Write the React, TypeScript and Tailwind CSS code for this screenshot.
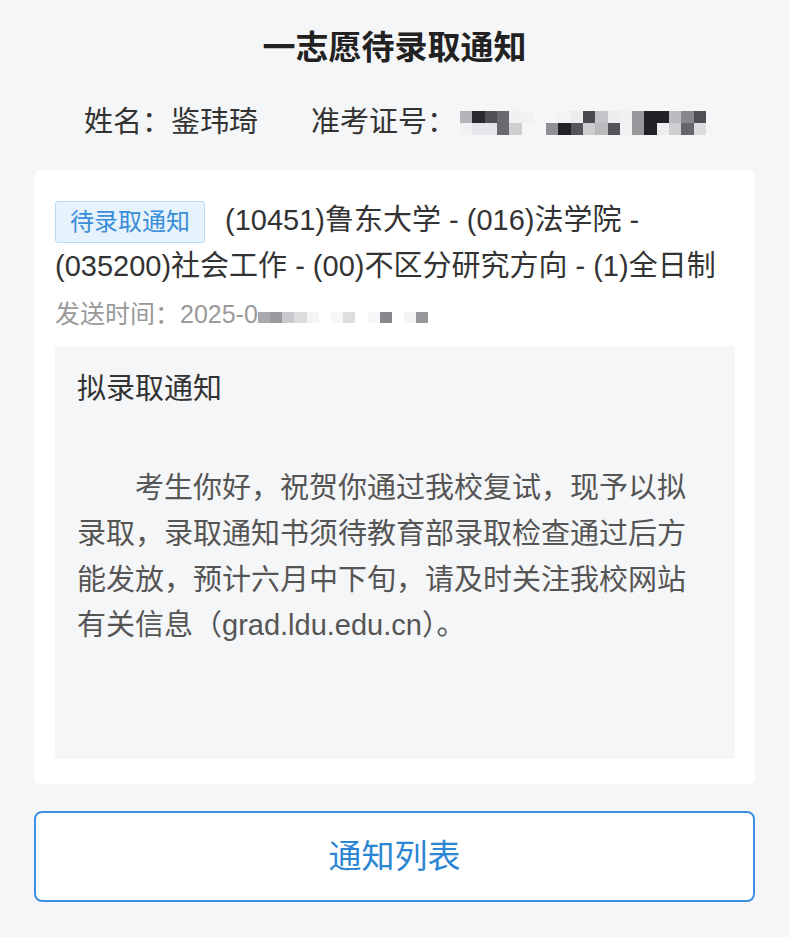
const font = "font-['Liberation_Sans','Noto_Sans_CJK_SC',sans-serif]";

// mosaic cells over the exam number (2 rows x 20 cols, 12px each)
const idRows: string[][] = [
  ["bg-[#b4b4b8]", "bg-[#2a2a2e]", "bg-[#505055]", "bg-[#6a6a6e]", "bg-[#f0f0f2]", "bg-[#f2f2f4]", "bg-transparent", "bg-transparent", "bg-[#f3f3f5]", "bg-[#ececef]", "bg-[#4a4a4e]", "bg-[#c4c4c8]", "bg-[#eeeef0]", "bg-[#f0f0f2]", "bg-[#98989c]", "bg-[#222226]", "bg-[#222226]", "bg-[#bcbcc0]", "bg-[#88888c]", "bg-[#505054]"],
  ["bg-[#f0f0f2]", "bg-[#e6e6ea]", "bg-[#e6e6ea]", "bg-[#6a6a6e]", "bg-[#cfcfd2]", "bg-transparent", "bg-transparent", "bg-[#909094]", "bg-[#222226]", "bg-[#555559]", "bg-[#cdcdd0]", "bg-[#bbbbbe]", "bg-[#555559]", "bg-[#f2f2f4]", "bg-[#99999c]", "bg-[#222226]", "bg-[#eeeef0]", "bg-[#cfcfd2]", "bg-[#66666a]", "bg-[#dcdcdf]"],
];

// mosaic after the send time
const timeCells: string[] = [
  "bg-[#aaaaae]", "bg-[#9a9a9e]", "bg-[#cacace]", "bg-[#dddde0]", "bg-[#f4f4f6]", "bg-transparent", "bg-[#f6f6f8]", "bg-[#dedee1]", "bg-transparent", "bg-[#f7f7f9]", "bg-[#88888c]", "bg-transparent", "bg-[#f4f4f6]", "bg-[#98989c]",
];

const Mosaic = ({ rows, cell }: { rows: string[][]; cell: string }) => (
  <div className="flex flex-col">
    {rows.map((row, i) => (
      <div key={i} className="flex">
        {row.map((c, j) => (
          <div key={j} className={`${cell} ${c}`} />
        ))}
      </div>
    ))}
  </div>
);

const App = () => {
  return (
    <div className={`min-h-screen bg-[#f5f6f8] px-[34px] pt-[28px] ${font}`}>
      <h1 className="text-center text-[33px] leading-[40px] font-bold text-[#222]">一志愿待录取通知</h1>

      <div className="mt-[34px] flex items-center pl-[50px] text-[29px] leading-[40px] text-[#333]">
        <span>姓名：鉴玮琦</span>
        <span className="ml-[53px]">准考证号：</span>
        <div className="ml-[4px] mt-[2px]">
          <Mosaic rows={idRows} cell="w-[12.3px] h-[12px]" />
        </div>
      </div>

      <div className="mt-[28px] rounded-[6px] bg-white pt-[27px] pl-[21px] pr-[20px] pb-[25px]">
        <p className="text-[29px] leading-[46px] text-[#333]">
          <span className="mr-[20px] inline-block h-[42px] rounded-[3px] border border-[#b9dcf5] bg-[#e6f3fd] px-[14px] align-middle text-[24px] leading-[40px] text-[#3a8dd8]">
            待录取通知
          </span>
          (10451)鲁东大学 - (016)法学院 - (035200)社会工作 - (00)不区分研究方向 - (1)全日制
        </p>
        <div className="mt-[7px] flex h-[36px] items-center text-[25px] text-[#9a9a9a]">
          <span>发送时间：2025-0</span>
          <div className="mt-[6px] flex">
            {timeCells.map((c, i) => (
              <div key={i} className={`h-[11px] w-[12.2px] ${c}`} />
            ))}
          </div>
        </div>

        <div className="mt-[14px] bg-[#f5f6f8] pt-[20px] pl-[22px] pr-[22px] pb-[110px]">
          <p className="text-[29px] leading-[46px] text-[#333]">拟录取通知</p>
          <p className="mt-[54px] indent-[58px] text-[29px] leading-[45.7px] text-[#555]">
            考生你好，祝贺你通过我校复试，现予以拟录取，录取通知书须待教育部录取检查通过后方能发放，预计六月中下旬，请及时关注我校网站有关信息（grad.ldu.edu.cn）。
          </p>
        </div>
      </div>

      <button className="mt-[27px] flex h-[91px] w-full items-center justify-center rounded-[8px] border-2 border-[#3d8fdf] bg-white text-[33px] text-[#2d86d4]">
        通知列表
      </button>
    </div>
  );
};

export default App;
